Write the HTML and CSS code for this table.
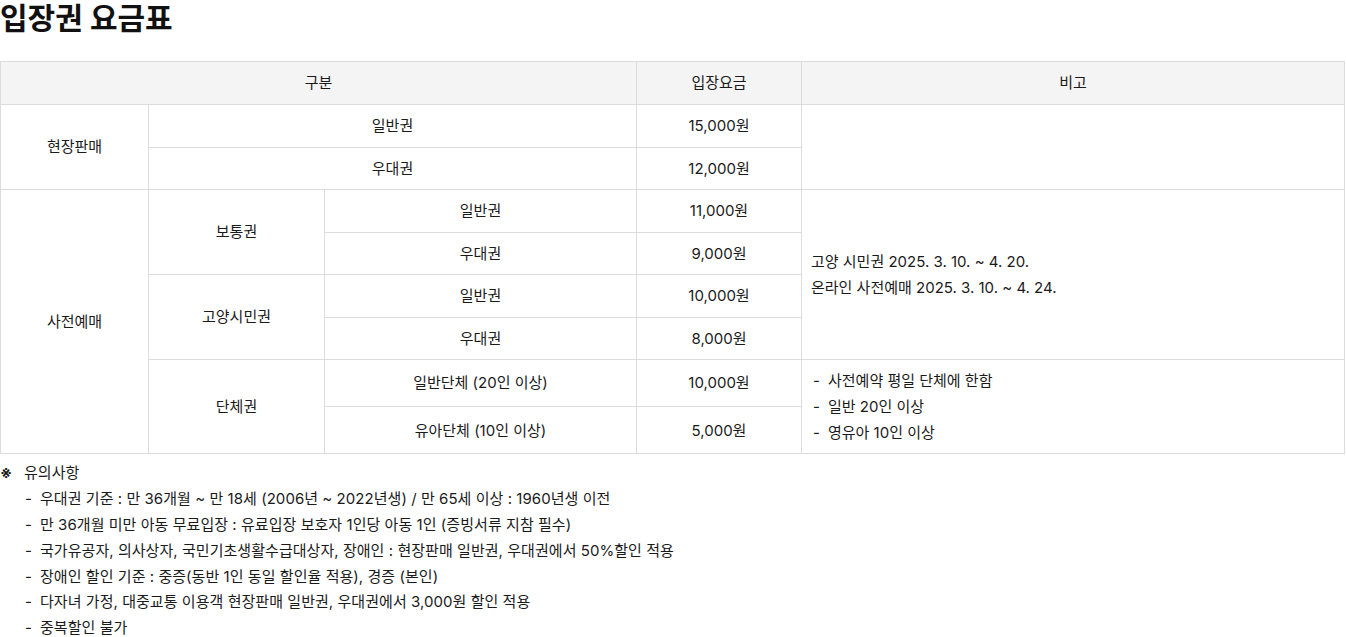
FILE: index.html
```html
<!DOCTYPE html>
<html lang="ko">
<head>
<meta charset="utf-8">
<title>입장권 요금표</title>
<link rel="stylesheet" href="styles.css">
</head>
<body>
<h2 class="title">입장권 요금표</h2>
<table class="fee">
  <colgroup>
    <col class="c1"><col class="c2"><col class="c3"><col class="c4"><col class="c5">
  </colgroup>
  <thead>
    <tr><th colspan="3">구분</th><th>입장요금</th><th>비고</th></tr>
  </thead>
  <tbody>
    <tr><td rowspan="2">현장판매</td><td colspan="2">일반권</td><td>15,000원</td><td rowspan="2" class="note"></td></tr>
    <tr><td colspan="2">우대권</td><td>12,000원</td></tr>
    <tr><td rowspan="6">사전예매</td><td rowspan="2">보통권</td><td>일반권</td><td>11,000원</td>
      <td rowspan="4" class="note">고양 시민권 2025. 3. 10. ~ 4. 20.<br>온라인 사전예매 2025. 3. 10. ~ 4. 24.</td></tr>
    <tr><td>우대권</td><td>9,000원</td></tr>
    <tr><td rowspan="2">고양시민권</td><td>일반권</td><td>10,000원</td></tr>
    <tr><td>우대권</td><td>8,000원</td></tr>
    <tr><td rowspan="2">단체권</td><td>일반단체 (20인 이상)</td><td>10,000원</td>
      <td rowspan="2" class="note">
        <ul class="dash cell-list">
          <li>사전예약 평일 단체에 한함</li>
          <li>일반 20인 이상</li>
          <li>영유아 10인 이상</li>
        </ul>
      </td></tr>
    <tr><td>유아단체 (10인 이상)</td><td>5,000원</td></tr>
  </tbody>
</table>
<div class="notice">
  <p class="notice-head"><span class="mark">※</span>유의사항</p>
  <ul class="dash notice-list">
    <li>우대권 기준 : 만 36개월 ~ 만 18세 (2006년 ~ 2022년생) / 만 65세 이상 : 1960년생 이전</li>
    <li>만 36개월 미만 아동 무료입장 : 유료입장 보호자 1인당 아동 1인 (증빙서류 지참 필수)</li>
    <li>국가유공자, 의사상자, 국민기초생활수급대상자, 장애인 : 현장판매 일반권, 우대권에서 50%할인 적용</li>
    <li>장애인 할인 기준 : 중증(동반 1인 동일 할인율 적용), 경증 (본인)</li>
    <li>다자녀 가정, 대중교통 이용객 현장판매 일반권, 우대권에서 3,000원 할인 적용</li>
    <li>중복할인 불가</li>
  </ul>
</div>
</body>
</html>
```

FILE: styles.css
```css
html, body {
  margin: 0;
  padding: 0;
  background: #fff;
}
body {
  font-family: "Inter", "Noto Sans CJK KR", sans-serif;
  font-size: 15px;
  color: #1a1a1a;
}
.title {
  margin: 0 0 25px 0;
  font-size: 30px;
  line-height: 36px;
  font-weight: 700;
  color: #111;
}
.fee {
  width: 1344px;
  border-collapse: collapse;
  table-layout: fixed;
}
.c1 { width: 148px; }
.c2 { width: 176px; }
.c3 { width: 312px; }
.c4 { width: 165px; }
.c5 { width: 543px; }
.fee th, .fee td {
  border: 1px solid #dcdcdc;
  padding: 8px 10px;
  line-height: 25.5px;
  text-align: center;
  vertical-align: middle;
  font-weight: 400;
}
.fee th {
  background: #f4f4f4;
  line-height: 26px;
}
.fee td.note {
  text-align: left;
  padding-left: 9px;
  line-height: 26px;
}
.dash {
  list-style: none;
  margin: 0;
  padding: 0;
}
.dash li {
  position: relative;
  padding-left: 17px;
}
.dash li::before {
  content: "-";
  position: absolute;
  left: 2px;
  top: 0;
}
.cell-list li {
  line-height: 25.8px;
}
.notice {
  margin-top: 6px;
  line-height: 25.8px;
  letter-spacing: 0.05px;
}
.notice-head {
  margin: 0;
}
.mark {
  display: inline-block;
  width: 24px;
  font-size: 15px;
  font-weight: 700;
}
.notice-list {
  padding-left: 23px;
}
```
